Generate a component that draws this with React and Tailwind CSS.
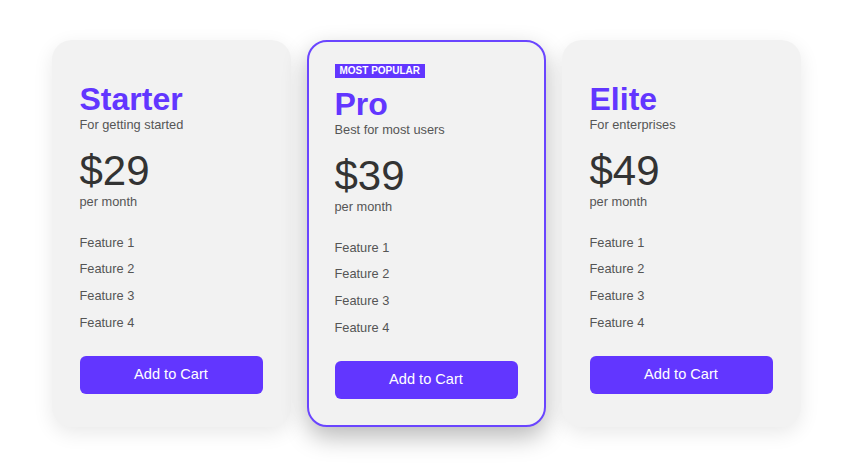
import React from "react";

const plans = [
  { name: "Starter", desc: "For getting started", price: "$29", popular: false },
  { name: "Pro", desc: "Best for most users", price: "$39", popular: true },
  { name: "Elite", desc: "For enterprises", price: "$49", popular: false },
];

function Card({ plan }) {
  return (
    <div
      className={
        "w-[239px] h-[387px] rounded-[20px] border-2 bg-[#f2f2f2] px-[26px] flex flex-col " +
        (plan.popular
          ? "border-[#6a45ff] pt-[22px] shadow-[0_10px_24px_rgba(0,0,0,0.28)]"
          : "border-transparent pt-[39px] shadow-[0_6px_20px_rgba(0,0,0,0.09)]")
      }
    >
      {plan.popular && (
        <div className="w-fit h-[14px] mb-[8px] bg-[#6236ff] px-[5px] text-[10px] leading-[14px] font-bold uppercase text-white">
          Most Popular
        </div>
      )}
      <h2 className="text-[32px] leading-[1.15] font-bold text-[#6236ff]">{plan.name}</h2>
      <p className="text-[12.8px] leading-[1.15] text-[#555]">{plan.desc}</p>
      <div className="mt-[14px] text-[42px] leading-[1.15] text-[#333]">{plan.price}</div>
      <p className="text-[12.8px] leading-[1.15] text-[#555]">per month</p>
      <ul className="mt-[20px]">
        {["Feature 1", "Feature 2", "Feature 3", "Feature 4"].map((f) => (
          <li key={f} className="py-[6px] text-[12.8px] leading-[1.15] text-[#555]">
            {f}
          </li>
        ))}
      </ul>
      <button className="mt-[19.5px] h-[38px] w-full rounded-[6px] bg-[#6236ff] text-[14.6px] text-white">
        Add to Cart
      </button>
    </div>
  );
}

export default function App() {
  return (
    <div
      className="w-[850px] h-[470px] bg-white flex justify-center items-start gap-[16px] pt-[40px] pl-[2px]"
      style={{ fontFamily: '"Liberation Sans", Arial, sans-serif' }}
    >
      {plans.map((p) => (
        <Card key={p.name} plan={p} />
      ))}
    </div>
  );
}
